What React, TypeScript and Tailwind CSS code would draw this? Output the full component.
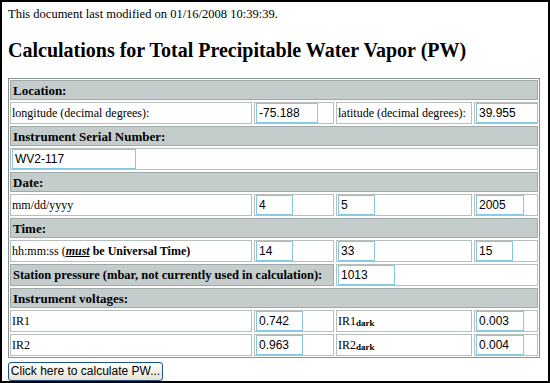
import React from 'react'

const serif = { fontFamily: '"Liberation Serif", "Times New Roman", serif' }

const Head = ({ children }: { children: React.ReactNode }) => (
  <div className="col-span-4 flex h-[20px] items-center whitespace-nowrap border border-[#9fa9a7] bg-[#c4cdcb] pl-[2px] text-[13px] font-bold leading-none">
    {children}
  </div>
)

const Cell = ({
  children,
  className = '',
}: {
  children?: React.ReactNode
  className?: string
}) => (
  <div
    className={`flex h-[22px] items-center whitespace-nowrap border border-[#b7bfbd] bg-white pl-[1px] text-[12px] leading-none ${className}`}
  >
    {children}
  </div>
)

const Field = ({ value, w }: { value: string; w: string }) => (
  <input
    defaultValue={value}
    className={`h-[20px] ${w} border border-[#86c8e2] bg-white px-[2px] text-[12px] text-black outline-none`}
    style={{ fontFamily: '"Liberation Sans", Arial, sans-serif' }}
  />
)

const App = () => {
  return (
    <div
      className="h-[383px] w-[550px] overflow-hidden border-2 border-black bg-white px-[6px] pt-[5px] text-black"
      style={serif}
    >
      <p className="text-[12.5px] leading-[14px]">
        This document last modified on 01/16/2008 10:39:39.
      </p>
      <h2 className="mt-[18px] text-[20px] font-bold leading-[22px]">
        Calculations for Total Precipitable Water Vapor (PW)
      </h2>
      <div className="mt-[17px] grid w-[532px] grid-cols-[242px_80px_136px_64px] gap-[2px] border border-[#88928f] p-[1px]">
        <Head>Location:</Head>
        <Cell>longitude (decimal degrees):</Cell>
        <Cell>
          <Field value="-75.188" w="w-[62px]" />
        </Cell>
        <Cell>latitude (decimal degrees):</Cell>
        <Cell>
          <Field value="39.955" w="w-[62px]" />
        </Cell>

        <Head>Instrument Serial Number:</Head>
        <Cell className="col-span-4">
          <Field value="WV2-117" w="w-[124px]" />
        </Cell>

        <Head>Date:</Head>
        <Cell>mm/dd/yyyy</Cell>
        <Cell>
          <Field value="4" w="w-[37px]" />
        </Cell>
        <Cell>
          <Field value="5" w="w-[37px]" />
        </Cell>
        <Cell>
          <Field value="2005" w="w-[48px]" />
        </Cell>

        <Head>Time:</Head>
        <Cell>
          hh:mm:ss (<b className="italic underline">must</b>
          <b>&nbsp;be Universal Time)</b>
        </Cell>
        <Cell>
          <Field value="14" w="w-[37px]" />
        </Cell>
        <Cell>
          <Field value="33" w="w-[37px]" />
        </Cell>
        <Cell>
          <Field value="15" w="w-[37px]" />
        </Cell>

        <div className="col-span-2 flex h-[22px] items-center overflow-hidden whitespace-nowrap border border-[#9fa9a7] bg-[#c4cdcb] pl-[2px] text-[12.5px] font-bold leading-none">
          Station pressure (mbar, not currently used in calculation):
        </div>
        <Cell className="col-span-2">
          <Field value="1013" w="w-[57px]" />
        </Cell>

        <Head>Instrument voltages:</Head>
        <Cell>IR1</Cell>
        <Cell>
          <Field value="0.742" w="w-[47px]" />
        </Cell>
        <Cell>
          IR1<sub className="text-[9px] font-bold">dark</sub>
        </Cell>
        <Cell>
          <Field value="0.003" w="w-[48px]" />
        </Cell>
        <Cell>IR2</Cell>
        <Cell>
          <Field value="0.963" w="w-[47px]" />
        </Cell>
        <Cell>
          IR2<sub className="text-[9px] font-bold">dark</sub>
        </Cell>
        <Cell>
          <Field value="0.004" w="w-[48px]" />
        </Cell>
      </div>
      <button
        className="mt-[2px] h-[19px] w-[155px] whitespace-nowrap rounded-[3px] border border-[#1c5180] bg-gradient-to-b from-white to-[#e6e3d6] text-[12px] leading-none"
        style={{ fontFamily: '"Liberation Sans", Arial, sans-serif' }}
      >
        Click here to calculate PW...
      </button>
    </div>
  )
}

export default App
